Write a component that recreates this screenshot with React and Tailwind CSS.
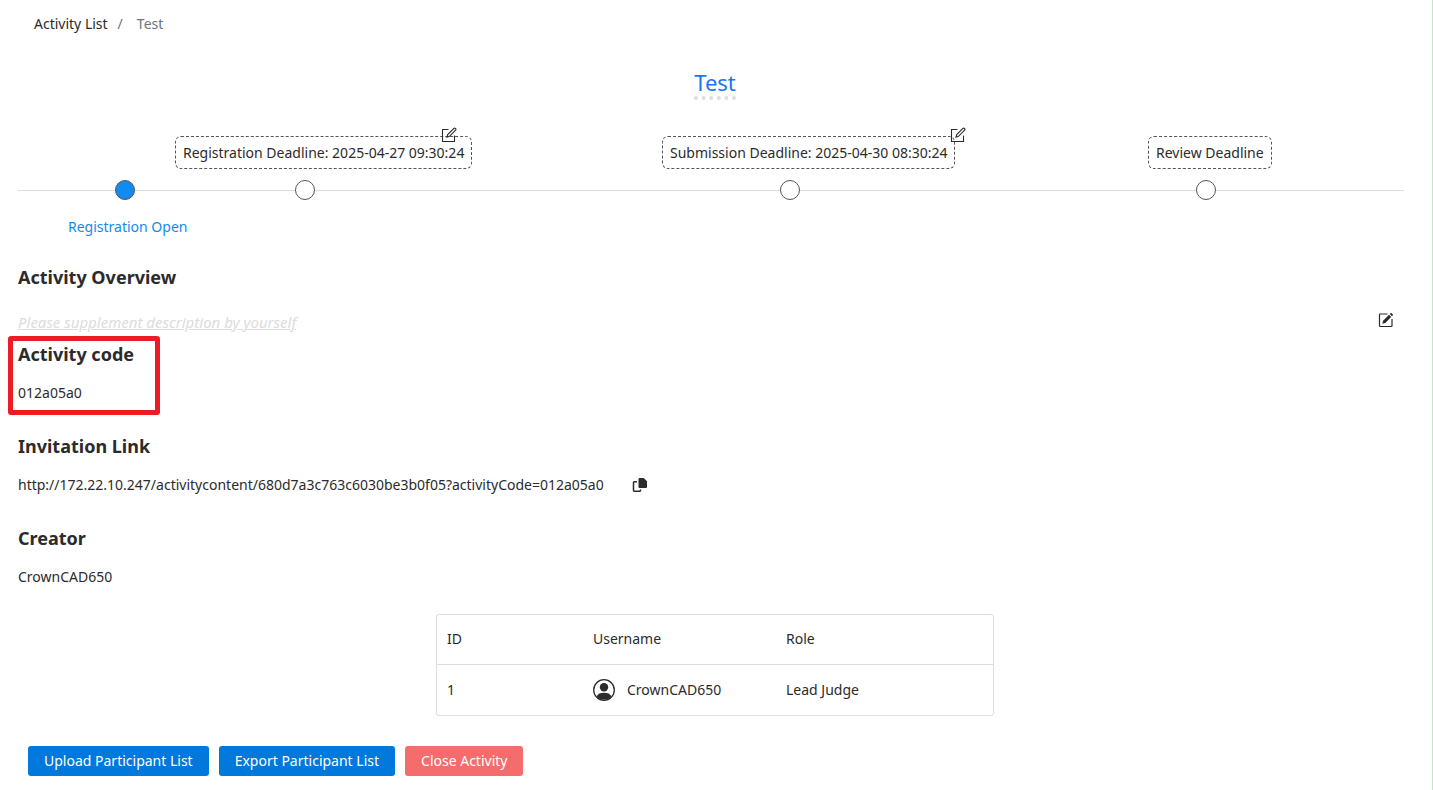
const stages = [
  { label: "Registration Deadline: 2025-04-27 09:30:24", edit: "right-[14px]" },
  { label: "Submission Deadline: 2025-04-30 08:30:24", edit: "-right-3" },
  { label: "Review Deadline" },
];

const members = [{ id: 1, username: "CrownCAD650", role: "Lead Judge" }];

function EditOutlineIcon() {
  return (
    <svg className="w-4 h-4" viewBox="0 0 16 16" fill="none" stroke="currentColor" strokeWidth="1.1">
      <path d="M7.5 2.5H1.5v12h12V8.5" />
      <path d="M6 10.2l.7-2.6 6.2-6.2c.4-.4 1-.4 1.4 0l.3.3c.4.4.4 1 0 1.4L8.5 9.3z" />
    </svg>
  );
}

function EditSolidIcon() {
  return (
    <svg className="w-4 h-4" viewBox="0 0 16 16">
      <path
        d="M9.5 2H2.2Q1.5 2 1.5 2.7v11.1q0 .7.7.7h11.1q.7 0 .7-.7V7"
        fill="none"
        stroke="currentColor"
        strokeWidth="1.2"
      />
      <path d="M4.3 11.7l.8-3 5.9-5.9 2.2 2.2-5.9 5.9zM11.7 2.1l.9-.9c.3-.3.7-.3 1 0l1.2 1.2c.3.3.3.7 0 1l-.9.9z" fill="currentColor" />
    </svg>
  );
}

function CopyIcon() {
  return (
    <svg className="w-4 h-4" viewBox="0 0 16 16">
      <path d="M7.5 1h4.2L15 4.2V10q0 1-1 1H7.5q-1 0-1-1V2q0-1 1-1z" fill="currentColor" />
      <path
        d="M5 4.8H2.2q-.7 0-.7.7v8q0 .7.7.7h5.6q.7 0 .7-.7V12.5"
        fill="none"
        stroke="currentColor"
        strokeWidth="1.5"
      />
    </svg>
  );
}

function UserIcon() {
  return (
    <svg className="w-[22px] h-[22px] shrink-0" viewBox="0 0 22 22">
      <circle cx="11" cy="11" r="10.3" fill="none" stroke="currentColor" strokeWidth="1.3" />
      <circle cx="11" cy="8.3" r="4.2" fill="currentColor" />
      <path d="M3.7 17.2Q5.5 13.8 11 13.8t7.3 3.4Q15.5 20.8 11 20.8t-7.3-3.6z" fill="currentColor" />
    </svg>
  );
}

function Section({ title, children }) {
  return (
    <section className="relative mb-[29px]">
      <h2 className="mb-[15px] text-lg leading-6 font-bold">{title}</h2>
      {children}
    </section>
  );
}

function Timeline() {
  return (
    <div className="mr-2">
      <div className="grid grid-cols-[157fr_487fr_486fr_256fr]">
        <span />
        {stages.map((stage) => (
          <div key={stage.label}>
            <div className="relative inline-flex items-center h-[33px] px-[7px] border border-dashed border-[#555] rounded-md whitespace-nowrap">
              {stage.label}
              {stage.edit && (
                <button aria-label="Edit deadline" className={`absolute -top-[10px] ${stage.edit}`}>
                  <EditOutlineIcon />
                </button>
              )}
            </div>
          </div>
        ))}
      </div>
      <div className="relative mt-[11px] grid grid-cols-[97fr_180fr_485fr_416fr_208fr]">
        <hr className="absolute inset-x-0 top-[10px] border-[#dcdcdc]" />
        <span />
        <span className="relative w-5 h-5 rounded-full border border-[#555] bg-[#128bf1]" />
        <span className="relative w-5 h-5 rounded-full border border-[#555] bg-white" />
        <span className="relative w-5 h-5 rounded-full border border-[#555] bg-white" />
        <span className="relative w-5 h-5 rounded-full border border-[#555] bg-white" />
      </div>
      <p className="mt-[15px] ml-[50px] text-[#128bf1]">Registration Open</p>
    </div>
  );
}

export default function App() {
  return (
    <div className="min-h-screen bg-white border-r border-[#c5e5c5] pl-[18px] pr-5 pt-3 pb-3 font-['Noto_Sans','Open_Sans',sans-serif] text-sm leading-6 text-[#2b2b2b]">
      <nav className="flex gap-[10px] pl-4" aria-label="Breadcrumb">
        <a href="#activities">Activity List</a>
        <span className="text-[#6c757d]">/</span>
        <span className="pl-1 text-[#6c757d]">Test</span>
      </nav>

      <div className="mt-8 mb-9 flex justify-center">
        <h1 className="border-b-4 border-dotted border-[#dedede] text-[22px] leading-7 text-[#1677f5]">Test</h1>
      </div>

      <Timeline />

      <section className="mt-[26px] mb-2">
        <h2 className="mb-[21px] text-lg leading-6 font-bold">Activity Overview</h2>
        <div className="flex justify-between items-start pr-[18px]">
          <p className="text-[15px] italic underline text-[#dcdcdc]">Please supplement description by yourself</p>
          <button aria-label="Edit description" className="mt-0.5">
            <EditSolidIcon />
          </button>
        </div>
      </section>

      <Section title="Activity code">
        <p>012a05a0</p>
        <span className="absolute -top-[6px] -left-[10px] -bottom-[10px] w-[152px] border-5 border-[#ed1c24] rounded-[3px] pointer-events-none" />
      </Section>

      <Section title="Invitation Link">
        <div className="flex items-center gap-7">
          <p>http://172.22.10.247/activitycontent/680d7a3c763c6030be3b0f05?activityCode=012a05a0</p>
          <button aria-label="Copy link">
            <CopyIcon />
          </button>
        </div>
      </Section>

      <Section title="Creator">
        <p>CrownCAD650</p>
      </Section>

      <div className="-mt-1 mx-auto w-[558px] max-w-full border border-[#dedede] rounded-[3px]">
        <table className="w-full table-fixed text-left">
          <thead>
            <tr className="h-[49px] border-b border-[#dedede]">
              <th className="w-[146px] pl-[10px] font-normal">ID</th>
              <th className="w-[193px] pl-[10px] font-normal">Username</th>
              <th className="pl-[10px] font-normal">Role</th>
            </tr>
          </thead>
          <tbody>
            {members.map((member) => (
              <tr key={member.id} className="h-[51px]">
                <td className="pl-[10px]">{member.id}</td>
                <td className="pl-[10px]">
                  <div className="flex items-center gap-3">
                    <UserIcon />
                    {member.username}
                  </div>
                </td>
                <td className="pl-[10px]">{member.role}</td>
              </tr>
            ))}
          </tbody>
        </table>
      </div>

      <div className="mt-[30px] ml-[10px] flex gap-[10px] text-white">
        <button className="h-[30px] px-4 rounded-[3px] bg-[#0078dc]">Upload Participant List</button>
        <button className="h-[30px] px-4 rounded-[3px] bg-[#0078dc]">Export Participant List</button>
        <button className="h-[30px] px-4 rounded-[3px] bg-[#f56c6c]">Close Activity</button>
      </div>
    </div>
  );
}
